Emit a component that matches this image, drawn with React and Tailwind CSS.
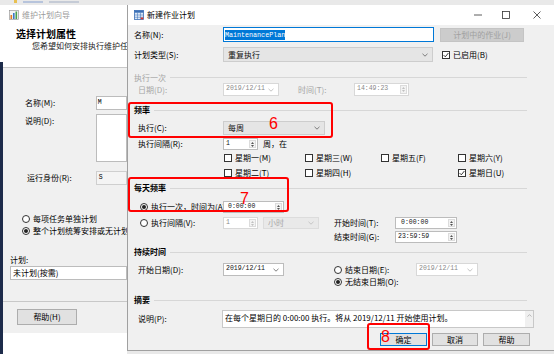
import React from 'react';

const MONO = "font-['Liberation_Mono','Noto_Sans_CJK_SC',monospace]";

function Chevron({ color = '#606060' }) {
  return (
    <svg width="6" height="4" viewBox="0 0 6 4" className="shrink-0">
      <path d="M0.5 0.8 L3 3.2 L5.5 0.8" fill="none" stroke={color} strokeWidth="0.8" />
    </svg>
  );
}

function SpinArrows({ disabled }) {
  const c = disabled ? '#c0c0c0' : '#555';
  return (
    <div className="w-[7px] self-stretch my-[1px] mr-[1px] bg-[#f3f3f3] border border-[#dcdcdc] flex flex-col items-center justify-center gap-[1px]">
      <svg width="3" height="2" viewBox="0 0 3 2"><path d="M0 2 L1.5 0 L3 2Z" fill={c} /></svg>
      <svg width="3" height="2" viewBox="0 0 3 2"><path d="M0 0 L1.5 2 L3 0Z" fill={c} /></svg>
    </div>
  );
}

function Field({ className = '', disabled, spin, drop, value, pad = 'pl-[2px]' }) {
  return (
    <div
      className={`flex items-center h-full bg-white border ${
        disabled ? 'border-[#d8d8d8] text-[#8a8a8a]' : 'border-[#bcbcbc] text-[#111]'
      } ${className}`}
    >
      <span className={`flex-1 ${pad} ${MONO} text-[6.5px]`}>{value}</span>
      {spin && <SpinArrows disabled={disabled} />}
      {drop && (
        <span className="mr-[4px]">
          <Chevron color={disabled ? '#b5b5b5' : '#606060'} />
        </span>
      )}
    </div>
  );
}

function Combo({ className = '', value, disabled }) {
  return (
    <div
      className={`flex items-center h-full border ${
        disabled ? 'bg-[#e9e9e9] border-[#dcdcdc] text-[#a8a8a8]' : 'bg-[#e5e5e5] border-[#cdcdcd] text-[#111]'
      } ${className}`}
    >
      <span className="flex-1 pl-[4px]">{value}</span>
      <span className="mr-[4px]">
        <Chevron color={disabled ? '#bdbdbd' : '#606060'} />
      </span>
    </div>
  );
}

function Checkbox({ checked, label, className = '' }) {
  return (
    <div className={`flex items-center gap-[3px] ${className}`}>
      <div className="w-[8px] h-[8px] border border-[#333] bg-white flex items-center justify-center shrink-0">
        {checked && (
          <svg width="6" height="6" viewBox="0 0 6 6">
            <path d="M0.6 3.1 L2.3 4.8 L5.4 1" fill="none" stroke="#222" strokeWidth="0.9" />
          </svg>
        )}
      </div>
      <span>{label}</span>
    </div>
  );
}

function Radio({ checked, label, className = '' }) {
  return (
    <div className={`flex items-center gap-[3px] ${className}`}>
      <div className="w-[8px] h-[8px] rounded-full border border-[#333] bg-white flex items-center justify-center shrink-0">
        {checked && <div className="w-[4px] h-[4px] rounded-full bg-[#222]" />}
      </div>
      <span>{label}</span>
    </div>
  );
}

function GroupHeader({ children, disabled, className = '' }) {
  return (
    <div className={`flex items-center gap-[4px] pl-[6px] pr-[27px] shrink-0 ${className}`}>
      <span className={disabled ? 'text-[#a5a5a5]' : 'text-black font-bold'}>{children}</span>
      <div className="flex-1 h-px bg-[#d7d7d7]" />
    </div>
  );
}

function Button({ children, className = '', focus }) {
  return (
    <div
      className={`h-full flex items-center justify-center bg-[#e1e1e1] border ${
        focus ? 'border-[#0078d7]' : 'border-[#adadad]'
      } ${className}`}
    >
      {children}
    </div>
  );
}

function WizardIcon() {
  return (
    <svg width="10" height="10" viewBox="0 0 10 10">
      <rect x="0.5" y="0.5" width="9" height="9" fill="#f4f4f4" stroke="#8a8a8a" strokeWidth="0.6" />
      <rect x="1.5" y="5" width="1.6" height="4" fill="#e07a20" />
      <rect x="4" y="3" width="1.6" height="6" fill="#3c78c8" />
      <rect x="6.5" y="1.5" width="1.6" height="7.5" fill="#4aa04a" />
    </svg>
  );
}

function CalendarIcon() {
  return (
    <svg width="10" height="10" viewBox="0 0 10 10">
      <rect x="0.5" y="0.5" width="9" height="9" fill="#dbe7f6" stroke="#3b6fb6" strokeWidth="0.8" />
      <rect x="0.5" y="0.5" width="9" height="2.2" fill="#3b6fb6" />
      <path d="M0.5 5 H9.5 M0.5 7.3 H9.5 M3.5 2.7 V9.5 M6.5 2.7 V9.5" stroke="#3b6fb6" strokeWidth="0.5" />
      <rect x="6.7" y="7.5" width="2.6" height="1.8" fill="#d9362b" />
    </svg>
  );
}

function WizardWindow() {
  return (
    <div className="absolute left-0 top-[5px] w-[127px] h-[349px] overflow-hidden flex flex-col bg-[#f0f0f0] text-[8px] leading-none">
      {/* title + header, white */}
      <div className="bg-white h-[63px] flex flex-col shrink-0 border-b border-[#c8c8c8]">
        <div className="h-[20px] flex items-center pl-[9px] gap-[3px]">
          <WizardIcon />
          <span className="text-[#9a9a9a]">维护计划向导</span>
        </div>
        <div className="pl-[16px] mt-[4px] text-[10px] font-bold text-black">选择计划属性</div>
        <div className="pl-[32px] mt-[3px] text-[#222] whitespace-nowrap">您希望如何安排执行维护任务?</div>
      </div>

      <div className="flex-1 flex flex-col">
        <div className="mt-[28px] h-[14px] flex items-center pl-[25px]">
          <span className="w-[93px]">名称(M):</span>
          <div className="w-[40px] h-full bg-white border border-[#bcbcbc] flex items-center pl-[1px]">
            <span className={`${MONO} text-[6.5px]`}>M</span>
          </div>
        </div>
        <div className="mt-[4px] h-[48px] flex items-start pl-[25px]">
          <span className="w-[93px] mt-[3px]">说明(D):</span>
          <div className="w-[40px] h-full bg-white border border-[#bcbcbc]" />
        </div>
        <div className="mt-[9px] h-[14px] flex items-center pl-[27px]">
          <span className="w-[91px]">运行身份(R):</span>
          <div className="w-[40px] h-full bg-[#f4f4f4] border border-[#cfcfcf] flex items-center pl-[2px]">
            <span className={`${MONO} text-[6.5px]`}>S</span>
          </div>
        </div>
        <Radio label="每项任务单独计划" className="mt-[28px] h-[12px] pl-[22px] whitespace-nowrap" />
        <Radio checked label="整个计划统筹安排或无计划" className="h-[12px] pl-[22px] whitespace-nowrap" />
        <div className="mt-[18px] pl-[10px] h-[10px] flex items-center">计划:</div>
        <div className="mt-[1px] ml-[10px] h-[14px] bg-white border border-[#bcbcbc] flex items-center pl-[2px]">
          未计划(按需)
        </div>
        <div className="mt-[21px] h-px bg-[#c8c8c8]" />
        <div className="mt-[7px] ml-[17px] w-[60px] h-[16px] bg-[#e1e1e1] border border-[#adadad] flex items-center justify-center">
          帮助(H)
        </div>
        <div className="flex-1 mt-[8px] bg-white" />
      </div>
    </div>
  );
}

function ScheduleDialog() {
  return (
    <div className="absolute left-[127px] top-[5px] w-[427px] h-[346px] bg-[#f0f0f0] border-l border-b border-[#a0a0a0] flex flex-col text-[8px] leading-none text-black">
      {/* title bar */}
      <div className="h-[20px] bg-white flex items-center pl-[6px] shrink-0">
        <CalendarIcon />
        <span className="ml-[3px]">新建作业计划</span>
        <div className="ml-auto flex items-center h-full">
          <div className="w-[28px] flex justify-center">
            <svg width="8" height="8" viewBox="0 0 8 8"><path d="M0 4 H8" stroke="#333" strokeWidth="0.8" /></svg>
          </div>
          <div className="w-[28px] flex justify-center">
            <svg width="8" height="8" viewBox="0 0 8 8"><rect x="0.5" y="0.5" width="7" height="7" fill="none" stroke="#333" strokeWidth="0.8" /></svg>
          </div>
          <div className="w-[34px] flex justify-center">
            <svg width="8" height="8" viewBox="0 0 8 8"><path d="M0.5 0.5 L7.5 7.5 M7.5 0.5 L0.5 7.5" stroke="#333" strokeWidth="0.8" /></svg>
          </div>
        </div>
      </div>

      {/* name */}
      <div className="mt-[2px] h-[15px] flex items-center pl-[6px] shrink-0">
        <span className="w-[89px]">名称(N):</span>
        <div className="w-[211px] h-full bg-white border border-[#0078d7] flex items-center pl-[1px]">
          <span className={`bg-[#0078d7] text-white ${MONO} text-[6.7px] leading-[10px]`}>MaintenancePlan</span>
        </div>
        <div className="ml-[6px] w-[84px] h-[14px] bg-[#cccccc] border border-[#c4c4c4] text-[#a0a0a0] flex items-center justify-center">
          计划中的作业(J)
        </div>
      </div>

      {/* type */}
      <div className="mt-[5px] h-[15px] flex items-center pl-[6px] shrink-0">
        <span className="w-[89px]">计划类型(S):</span>
        <Combo className="w-[210px]" value="重复执行" />
        <Checkbox checked label="已启用(B)" className="ml-[9px]" />
      </div>

      {/* one time */}
      <GroupHeader disabled className="mt-[10px] h-[11px]">执行一次</GroupHeader>
      <div className="h-[13px] flex items-center pl-[10px] text-[#a5a5a5] shrink-0">
        <span className="w-[85px]">日期(D):</span>
        <Field className="w-[56px]" disabled drop value="2019/12/11" />
        <span className="ml-[19px] w-[56px]">时间(T):</span>
        <Field className="w-[55px]" disabled spin value="14:49:23" />
      </div>

      {/* frequency */}
      <GroupHeader className="mt-[8px] h-[12px]">频率</GroupHeader>
      <div className="mt-[5px] h-[14px] flex items-center pl-[10px] shrink-0">
        <span className="w-[85px]">执行(C):</span>
        <Combo className="w-[102px]" value="每周" />
      </div>
      <div className="mt-[3px] h-[12px] flex items-center pl-[10px] shrink-0">
        <span className="w-[85px]">执行间隔(R):</span>
        <Field className="w-[35px]" spin value="1" />
        <span className="ml-[5px]">周，在</span>
      </div>
      <div className="mt-[2px] h-[12px] flex items-center pl-[96px] shrink-0">
        <Checkbox label="星期一(M)" className="w-[81px]" />
        <Checkbox label="星期三(W)" className="w-[76px]" />
        <Checkbox label="星期五(F)" className="w-[77px]" />
        <Checkbox label="星期六(Y)" />
      </div>
      <div className="mt-[3px] h-[12px] flex items-center pl-[96px] shrink-0">
        <Checkbox label="星期二(T)" className="w-[81px]" />
        <Checkbox label="星期四(H)" className="w-[153px]" />
        <Checkbox checked label="星期日(U)" />
      </div>

      {/* daily frequency */}
      <GroupHeader className="mt-[3px] h-[12px]">每天频率</GroupHeader>
      <div className="mt-[7px] h-[12px] flex items-center pl-[12px] shrink-0">
        <Radio checked label="执行一次，时间为(A):" className="w-[83px] whitespace-nowrap overflow-hidden" />
        <Field className="w-[61px]" spin pad="pl-[4px]" value="0:00:00" />
      </div>
      <div className="mt-[4px] h-[12px] flex items-center pl-[12px] shrink-0">
        <Radio label="执行间隔(V):" className="w-[83px]" />
        <Field className="w-[35px]" disabled spin value="1" />
        <Combo className="ml-[5px] w-[56px]" disabled value="小时" />
        <span className="ml-[15px] w-[61px]">开始时间(T):</span>
        <Field className="w-[62px]" spin pad="pl-[5px]" value="0:00:00" />
      </div>
      <div className="mt-[2px] h-[12px] flex items-center pl-[206px] shrink-0">
        <span className="w-[61px]">结束时间(G):</span>
        <Field className="w-[62px]" spin value="23:59:59" />
      </div>

      {/* duration */}
      <GroupHeader className="mt-[3px] h-[12px]">持续时间</GroupHeader>
      <div className="mt-[5px] h-[13px] flex items-center pl-[10px] shrink-0">
        <span className="w-[85px]">开始日期(D):</span>
        <Field className="w-[61px]" drop value="2019/12/11" />
        <Radio label="结束日期(E):" className="ml-[50px] w-[82px]" />
        <Field className="w-[62px]" disabled drop value="2019/12/11" />
      </div>
      <div className="h-[12px] flex items-center pl-[206px] shrink-0">
        <Radio checked label="无结束日期(O):" />
      </div>

      {/* summary */}
      <GroupHeader className="mt-[6px] h-[12px]">摘要</GroupHeader>
      <div className="mt-[4px] h-[18px] flex items-center pl-[10px] shrink-0">
        <span className="w-[84px]">说明(P):</span>
        <div className="w-[312px] h-full bg-white border border-[#c8c8c8] flex">
          <span className="flex-1 pl-[2px] pt-[3px] whitespace-nowrap">
            在每个星期日的 0:00:00 执行。将从 2019/12/11 开始使用计划。
          </span>
          <div className="w-[8px] h-full bg-[#f0f0f0] flex justify-center pt-[3px]">
            <svg width="5" height="3" viewBox="0 0 5 3"><path d="M0.5 2.6 L2.5 0.6 L4.5 2.6" fill="none" stroke="#a0a0a0" strokeWidth="0.7" /></svg>
          </div>
        </div>
      </div>

      {/* buttons */}
      <div className="mt-[5px] h-[13px] flex items-center justify-end gap-[5px] pr-[24px] shrink-0">
        <Button focus className="w-[47px]">确定</Button>
        <Button className="w-[46px]">取消</Button>
        <Button className="w-[47px]">帮助</Button>
      </div>
    </div>
  );
}

export default function App() {
  return (
    <div className="relative w-[554px] h-[354px] overflow-hidden bg-[#e9e9e9] font-['Microsoft_YaHei','Noto_Sans_CJK_SC',sans-serif]">
      {/* desktop strip behind the windows */}
      <div className="absolute left-0 top-0 w-full h-[5px] flex items-start gap-[6px] pl-[14px]">
        <div className="w-[3px] h-[3px] bg-[#e8c050]" />
        <div className="w-[20px] h-[2px] bg-[#b7c4dc] mt-[1px]" />
        <div className="w-[30px] h-[2px] bg-[#c5cbd6] mt-[1px]" />
      </div>
      <div className="absolute left-0 top-[62px] bottom-0 w-[3px] bg-[#1d2b4a] z-10" />

      <WizardWindow />
      <ScheduleDialog />

      {/* annotations */}
      <div className="absolute left-[128px] top-[102px] w-[205px] h-[36px] border-2 border-[#ff0000] rounded-[3px]" />
      <div className="absolute left-[128px] top-[177px] w-[161px] h-[35px] border-2 border-[#ff0000] rounded-[3px]" />
      <div className="absolute left-[367px] top-[323px] w-[63px] h-[27px] border-2 border-[#ff0000] rounded-[3px]" />
      <span className="absolute left-[269px] top-[116px] text-[16px] leading-none text-[#ff0000] font-['Liberation_Sans',sans-serif]">6</span>
      <span className="absolute left-[240px] top-[191px] text-[16px] leading-none text-[#ff0000] font-['Liberation_Sans',sans-serif]">7</span>
      <span className="absolute left-[381px] top-[329px] text-[16px] leading-none text-[#ff0000] font-['Liberation_Sans',sans-serif]">8</span>
    </div>
  );
}
